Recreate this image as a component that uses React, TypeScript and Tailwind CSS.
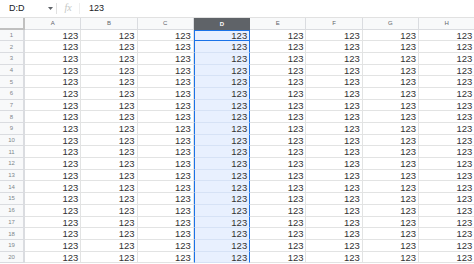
import React from 'react';

const cols = ['A', 'B', 'C', 'D', 'E', 'F', 'G', 'H'];
const rows = Array.from({ length: 20 }, (_, i) => i + 1);

const FormulaBar: React.FC = () => (
  <div className="flex items-center h-[17.5px] border-b border-[#e1e1e1] bg-white text-[9px] text-[#202124]">
    <div className="flex items-center justify-between w-[56px] pl-[9px] pr-[3px]">
      <span>D:D</span>
      <svg width="5" height="3" viewBox="0 0 5 3"><path d="M0 0h5L2.5 3z" fill="#5f6368" /></svg>
    </div>
    <div className="h-[11px] w-px bg-[#e1e1e1]" />
    <span className="w-[22px] text-center text-[#c4c7c5] italic font-['Liberation_Serif',serif] text-[10px]">fx</span>
    <div className="h-[11px] w-px bg-[#eeeeee]" />
    <span className="ml-[9px]">123</span>
  </div>
);

const HeaderRow: React.FC = () => (
  <div className="flex h-[12px]">
    <div className="w-[25px] shrink-0 bg-[#f8f9fa] border-r-[2px] border-b-[2px] border-[#c0c0c0]" />
    {cols.map((c) =>
      c === 'D' ? (
        <div key={c} className="w-[56.3px] shrink-0 bg-[#5f6368] text-white flex items-center justify-center text-[6px] font-bold">
          {c}
        </div>
      ) : (
        <div key={c} className="w-[56.3px] shrink-0 bg-[#f8f9fa] border-r border-b border-[#dadce0] text-[#5f6368] flex items-center justify-center text-[6px]">
          {c}
        </div>
      )
    )}
  </div>
);

const DataRow: React.FC<{ n: number }> = ({ n }) => (
  <div className="flex h-[11.7px]">
    <div className="w-[25px] shrink-0 bg-[#f8f9fa] border-r-[2px] border-b border-[#dadce0] text-[#80868b] flex items-center justify-center text-[6px]">
      {n}
    </div>
    {cols.map((c) => {
      const sel = c === 'D';
      const active = sel && n === 1;
      return (
        <div
          key={c}
          className={
            sel
              ? `w-[56.3px] shrink-0 bg-[#e8f0fe] border-x border-x-[#1a73e8] border-b border-b-[#d6e2f5] flex items-center justify-end pr-[2px] pt-px text-[9.5px] text-[#333333] ${active ? 'outline outline-[1.5px] outline-[#1a73e8] -outline-offset-1' : ''}`
              : 'w-[56.3px] shrink-0 border-r border-b border-[#e2e3e3] flex items-center justify-end pr-[2px] pt-px text-[9.5px] text-[#333333]'
          }
        >
          123
        </div>
      );
    })}
  </div>
);

export default function App() {
  return (
    <div className="w-[474px] h-[264px] overflow-hidden bg-white font-['Liberation_Sans',Arial,sans-serif] leading-none">
      <FormulaBar />
      <HeaderRow />
      {rows.map((n) => (
        <DataRow key={n} n={n} />
      ))}
    </div>
  );
}
